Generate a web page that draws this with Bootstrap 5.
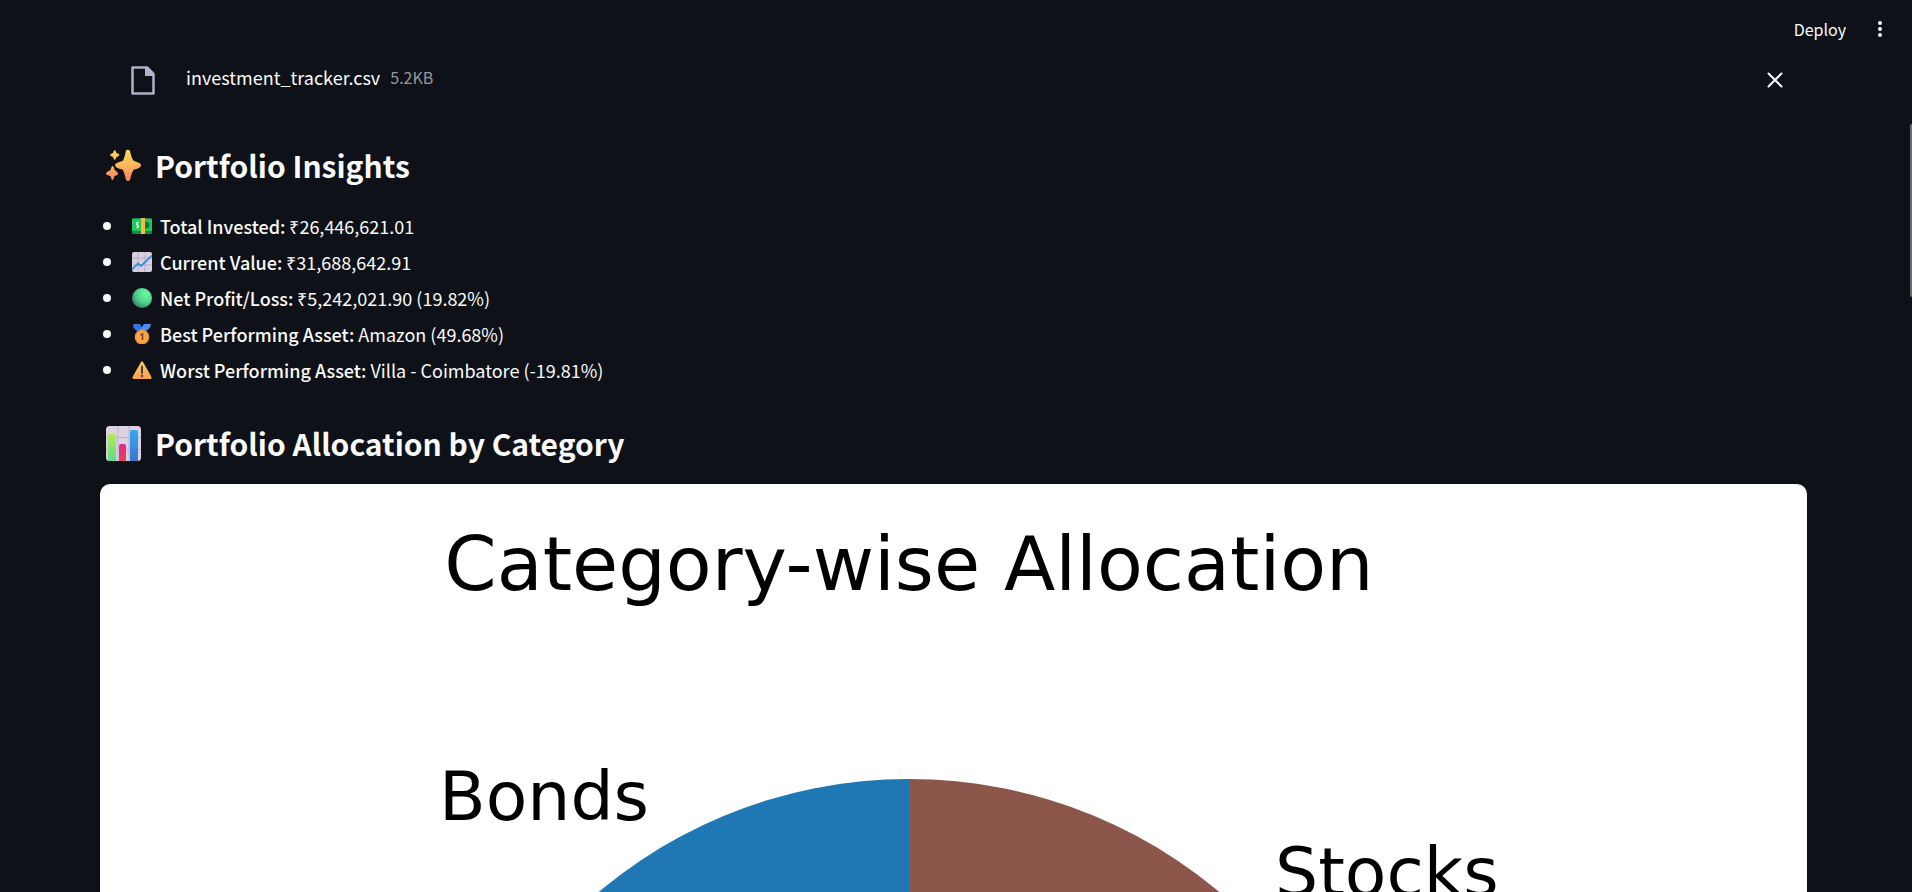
<!DOCTYPE html>
<html lang="en">
<head>
<meta charset="utf-8">
<meta name="viewport" content="width=device-width, initial-scale=1">
<title>Investment Tracker</title>
<link href="https://cdn.jsdelivr.net/npm/bootstrap@5.3.0/dist/css/bootstrap.min.css" rel="stylesheet">
<style>
  body { background: #0e1117; color: #fafafa; font-family: "Noto Sans CJK JP", "Open Sans", sans-serif; font-size: 18px; line-height: 32px; }
  .app-header { height: 58px; padding-right: 18px; }
  .app-header button, .file-row button { color: #fafafa; }
  .app-header button { font-size: 16px; line-height: 24px; }
  .app-main { padding: 0 105px 0 100px; }
  .file-row { height: 44px; padding: 0 20px 0 31px; }
  .file-info { margin-left: 31px; padding-bottom: 6px; line-height: 24px; gap: 10px; }
  .file-size { font-size: 16px; color: #96989c; }
  .section-title { font-size: 30px; line-height: 42px; font-weight: 700; gap: 14px; padding-left: 6px; }
  .title-insights { margin: 42px 0 24px; }
  .title-allocation { margin: 36px 0 20px; }
  .insights { list-style: none; }
  .insights li { gap: 8px; height: 32px; }
  .insights strong { font-weight: 500; }
  .insights li::before { content: ""; width: 8px; height: 8px; border-radius: 50%; background: #fafafa; margin-left: 3px; margin-right: 13px; }
  .chart { border-radius: 10px; background: #fff; }
  .chart text { font-family: "DejaVu Sans", sans-serif; }
  .scroll-thumb { top: 124px; right: 0; width: 2px; height: 173px; background: #6b6c70; border-radius: 2px 0 0 2px; }
</style>
</head>
<body>
<div class="vh-100 overflow-hidden position-relative">
  <header class="app-header d-flex justify-content-end align-items-center gap-3">
    <button type="button" class="btn p-1 border-0">Deploy</button>
    <button type="button" class="btn p-1 border-0 d-flex" aria-label="Main menu">
      <svg width="20" height="20" viewBox="0 0 20 20" fill="#fafafa"><circle cx="10" cy="4" r="2"/><circle cx="10" cy="10" r="2"/><circle cx="10" cy="16" r="2"/></svg>
    </button>
  </header>
  <main class="app-main">
    <div class="file-row d-flex align-items-center">
      <svg width="24" height="30" viewBox="0 0 24 30"><path d="M1.500 2.500H16L22.500 9V28.500H1.500Z" fill="none" stroke="#b0b3c8" stroke-width="2.500" stroke-linejoin="round"/><path d="M14 2h2l7 7v2h-9z" fill="#b0b3c8"/></svg>
      <div class="file-info d-flex flex-grow-1">
        <span>investment_tracker.csv</span>
        <span class="file-size">5.2KB</span>
      </div>
      <button type="button" class="btn p-1 border-0 d-flex" aria-label="Remove file">
        <svg width="16" height="16" viewBox="0 0 16 16" stroke="#fafafa" stroke-width="2" stroke-linecap="round"><path d="M1.500 1.500l13 13M14.500 1.500l-13 13"/></svg>
      </button>
    </div>

    <h2 class="section-title title-insights d-flex align-items-center">
      <svg width="35" height="35" viewBox="0 0 35 35"><defs><linearGradient id="spark" x1="0" y1="0" x2="0" y2="35" gradientUnits="userSpaceOnUse"><stop offset="0" stop-color="#ffd95a"/><stop offset=".5" stop-color="#ffb65a"/><stop offset="1" stop-color="#fb7766"/></linearGradient></defs><g fill="url(#spark)"><path d="M20 2.500Q22 1 24 3Q26 12 28 13Q35 15 35 17Q35 20 28 21.500Q26 23 24 32Q22 34 20 32Q18 23 16.500 21.500Q9 20 9 17Q9 15 16.500 13Q18 12 20 2.500Z"/><path d="M8.500 2Q9.500 2 10.500 5Q13.500 6 13.500 7Q13.500 8 10.500 9Q9.500 12 8.500 12Q8 12 7 9Q4 8 4 7Q4 6 7 5Q8 2 8.500 2Z"/><path d="M6.500 18Q8 18 8.500 22Q12 24 12 25.500Q12 27 8.500 28Q7.500 32 6.500 32Q5.500 32 4.500 28Q0 27 0 25.500Q0 24 4.500 22Q5.500 18 6.500 18Z"/></g></svg>
      <span>Portfolio Insights</span>
    </h2>

    <ul class="insights d-flex flex-column gap-1 p-0 m-0">
      <li class="d-flex align-items-center">
        <svg width="20" height="20" viewBox="0 0 20 20"><rect y="2" width="20" height="16" rx="1.500" fill="#168a4c"/><rect y="3" width="20" height="12" rx="1" fill="#22c85c"/><circle cx="14" cy="9" r="3.500" fill="#0e7a43"/><path d="M7 6.500H4.500V9H6.500V11.500H4M5.500 5.500v7" stroke="#c9f7d5" fill="none"/><path d="M9 2h4v16H9z" fill="#f9bd35"/></svg>
        <span><strong>Total Invested:</strong> ₹26,446,621.01</span>
      </li>
      <li class="d-flex align-items-center">
        <svg width="20" height="20" viewBox="0 0 20 20"><rect width="20" height="20" rx="2" fill="#d8cfe2"/><path d="M6 0v20M13 0v20M0 6h20M0 13h20" stroke="#b7adc6"/><path d="M0 17.500L6 11.500L9 14L20 3.500" fill="none" stroke="#2f93dc" stroke-width="1.800"/></svg>
        <span><strong>Current Value:</strong> ₹31,688,642.91</span>
      </li>
      <li class="d-flex align-items-center">
        <svg width="20" height="20" viewBox="0 0 20 20"><defs><radialGradient id="ball" cx=".68" cy=".3" r=".75"><stop offset="0" stop-color="#6dfba4"/><stop offset=".6" stop-color="#4fd08c"/><stop offset="1" stop-color="#398070"/></radialGradient></defs><circle cx="10" cy="10" r="10" fill="url(#ball)"/></svg>
        <span><strong>Net Profit/Loss:</strong> ₹5,242,021.90 (19.82%)</span>
      </li>
      <li class="d-flex align-items-center">
        <svg width="20" height="20" viewBox="0 0 20 20"><path d="M1 1Q1 0 2 0H8L11 6L7 8Q1 5 1 1Z" fill="#3378e8"/><path d="M19 1Q19 0 18 0H12L7 7L12 8Q18 5 19 1Z" fill="#4a8cf4"/><circle cx="10" cy="13" r="7.300" fill="#f79636"/><circle cx="10" cy="13" r="5.500" fill="#fba944"/><path d="M8.500 11L10.500 10V16" fill="none" stroke="#7a3c4a" stroke-width="1.600"/></svg>
        <span><strong>Best Performing Asset:</strong> Amazon (49.68%)</span>
      </li>
      <li class="d-flex align-items-center">
        <svg width="20" height="20" viewBox="0 0 20 20"><defs><linearGradient id="warn" x1="0" y1="0" x2="0" y2="1"><stop offset="0" stop-color="#ffcf5a"/><stop offset="1" stop-color="#fba04e"/></linearGradient></defs><path d="M9 2Q10 .5 11 2L19.500 17Q20 19 18.500 19H1.500Q0 19 .5 17Z" fill="url(#warn)"/><path d="M10 6.500V13" stroke="#4b3a4a" stroke-width="2" stroke-linecap="round"/><circle cx="10" cy="16" r="1.200" fill="#4b3a4a"/></svg>
        <span><strong>Worst Performing Asset:</strong> Villa - Coimbatore (-19.81%)</span>
      </li>
    </ul>

    <h2 class="section-title title-allocation d-flex align-items-center">
      <svg width="35" height="35" viewBox="0 0 35 35"><defs><linearGradient id="g" x1="0" y1="0" x2="0" y2="1"><stop offset="0" stop-color="#b5ea55"/><stop offset="1" stop-color="#5fdc8b"/></linearGradient><linearGradient id="p" x1="0" y1="0" x2="0" y2="1"><stop offset="0" stop-color="#e52a90"/><stop offset="1" stop-color="#e6415e"/></linearGradient><linearGradient id="b" x1="0" y1="0" x2="0" y2="1"><stop offset="0" stop-color="#35a8f5"/><stop offset="1" stop-color="#3b76cf"/></linearGradient></defs><rect width="35" height="35" rx="3.500" fill="#dcd3e2"/><path d="M12 0v35M23 0v35M0 11.500h35M0 23.500h35" stroke="#bfb4ca"/><path d="M2 35V10q0-2 2-2h4q2 0 2 2V35z" fill="url(#g)"/><path d="M13 35V20q0-2 2-2h3q2 0 2 2V35z" fill="url(#p)"/><path d="M24 35V6q0-2 2-2h4q2 0 2 2V35z" fill="url(#b)"/></svg>
      <span>Portfolio Allocation by Category</span>
    </h2>

    <svg class="chart d-block w-100" viewBox="0 0 1707 1400" role="img" aria-label="Category-wise Allocation">
      <text x="809" y="106" font-size="75" text-anchor="middle">Category-wise Allocation</text>
      <path d="M809 295A483 483 0 0 0 809 1261Z" fill="#1f77b4"/>
      <path d="M809 295A483 483 0 0 1 809 1261Z" fill="#8c564b"/>
      <text x="549" y="336" font-size="68" text-anchor="end">Bonds</text>
      <text x="1175" y="412" font-size="68">Stocks</text>
    </svg>
  </main>
  <div class="scroll-thumb position-absolute"></div>
</div>
<script src="https://cdn.jsdelivr.net/npm/bootstrap@5.3.0/dist/js/bootstrap.bundle.min.js"></script>
</body>
</html>
